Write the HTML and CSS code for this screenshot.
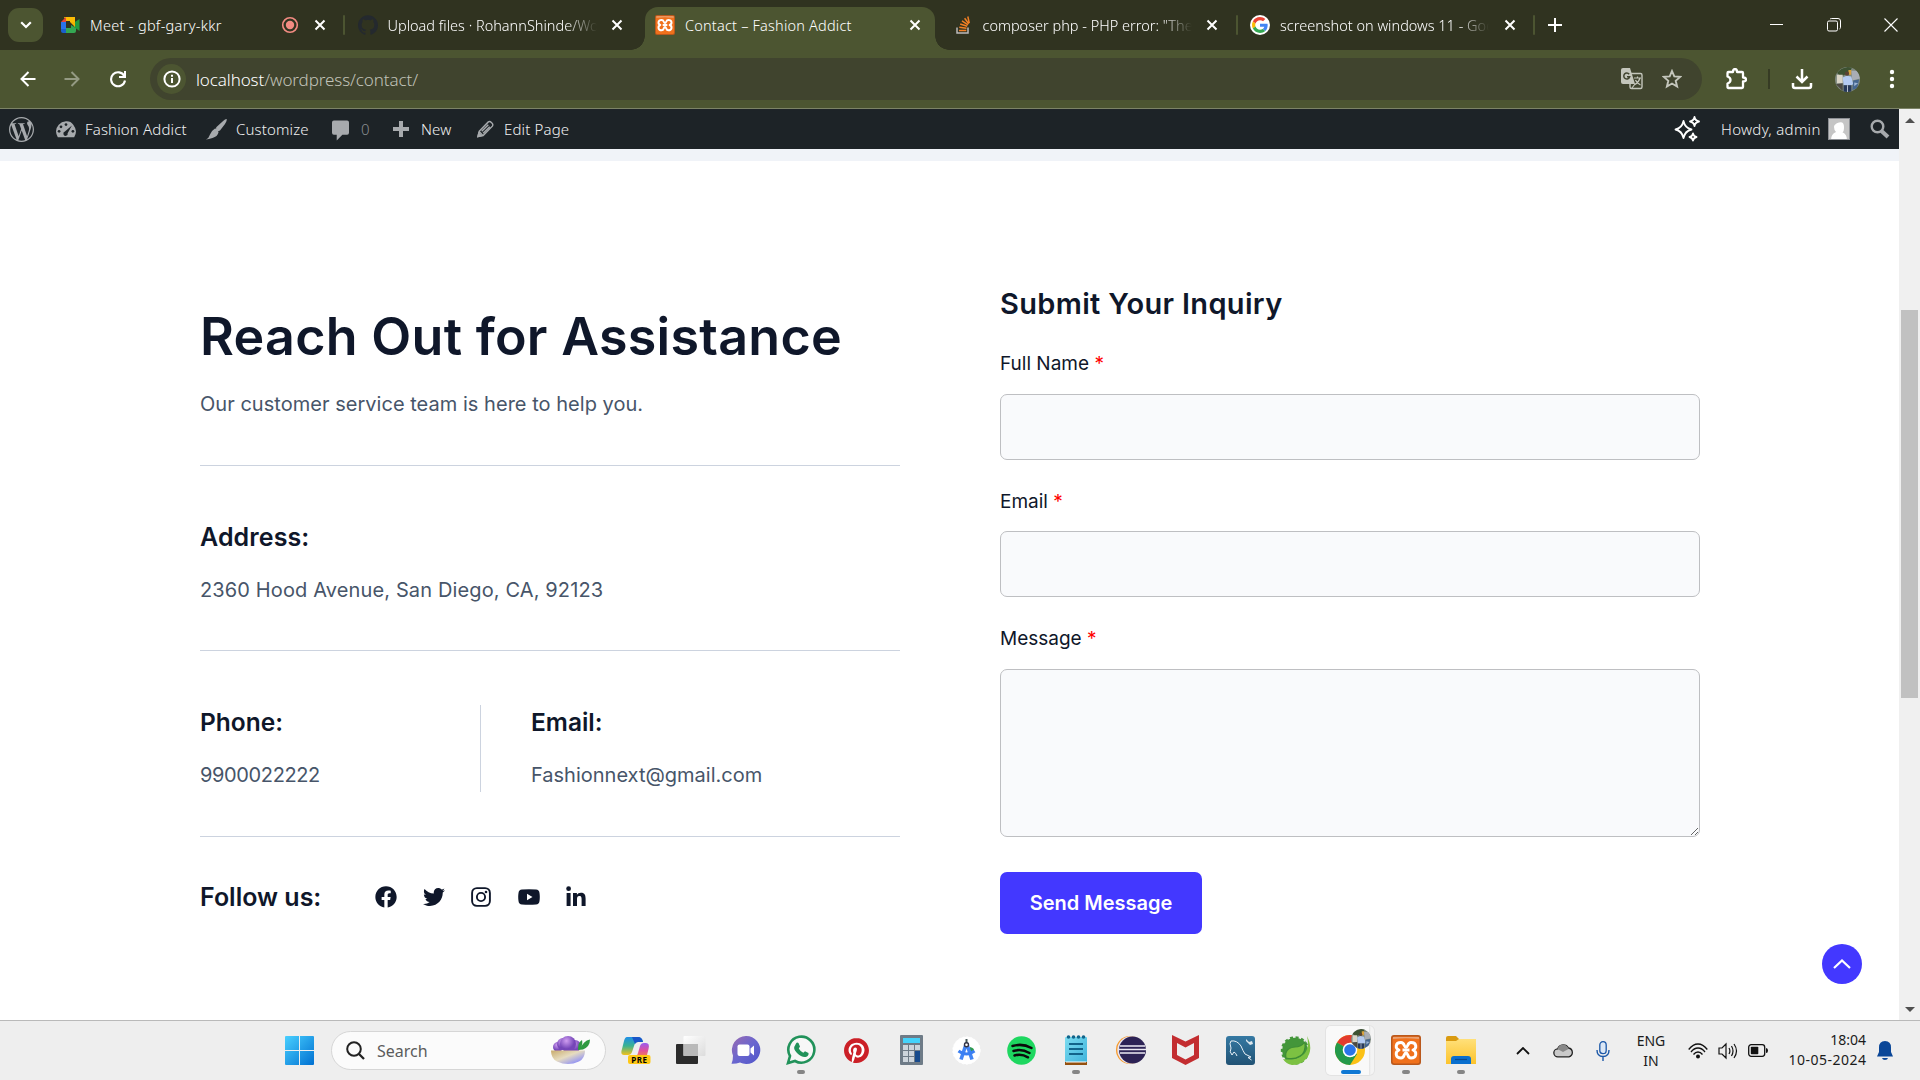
FILE: index.html
```html
<!DOCTYPE html>
<html lang="en">
<head>
<meta charset="utf-8">
<title>Contact – Fashion Addict</title>
<link rel="stylesheet" href="styles.css">
</head>
<body>
<svg class="defs" width="0" height="0" aria-hidden="true">
  <defs>
    <symbol id="x" viewBox="0 0 12 12"><path d="M1.5 1.5l9 9M10.500 1.5l-9 9" fill="none" stroke="currentColor" stroke-width="2"/></symbol>
    <symbol id="xampp" viewBox="0 0 30 30">
      <rect width="30" height="30" rx="3" fill="#b9581c"/><rect x="1.500" y="1.500" width="27" height="27" rx="2" fill="#f0711c"/><path d="M2 2h26v2q-13-1.500-26 0z" fill="#e9a274"/>
      <path d="M10 7.500C4 7.500 4 13.500 8 15c-4 1.500-4 8 2 8 4 0 2.500-5 5-5s1 5 5 5c6 0 6-6.500 2-8 4-1.500 4-7.500-2-7.500-4 0-2.500 4.500-5 4.500s-1-4.500-5-4.500zM11.500 15h7" fill="none" stroke="#fff" stroke-width="2.900" stroke-linejoin="round"/>
    </symbol>
    <symbol id="person" viewBox="0 0 26 26">
      <clipPath id="round"><circle cx="13" cy="13" r="13"/></clipPath>
      <g clip-path="url(#round)"><rect width="26" height="26" fill="#7f8a80"/><path d="M2 6Q8-1 18 0l-3 6-9 4z" fill="#3e5232"/><path d="M2 8h6v9H2z" fill="#d9d4c6"/><path d="M14 3h3v5h-3z" fill="#d8a23c"/><path d="M17 4h7l2 8-8 2z" fill="#a9adb4"/><path d="M8 11l4-2 5 1 2 8-2 1H9z" fill="#b4cbf2"/><circle cx="12.500" cy="7" r="2.200" fill="#5a4234"/><path d="M9 19h8v7H9z" fill="#27395a"/><path d="M12.500 19h1v7h-1z" fill="#b9c2cf"/><path d="M19 14l6-1-2 9-5 2z" fill="#44658f"/><path d="M20 16l4 1-4 3z" fill="#9db4d2"/><path d="M1 18l7-1v8z" fill="#4d4a42"/></g>
    </symbol>
    <linearGradient id="win" x1="0" y1="0" x2="1" y2="1"><stop offset="0" stop-color="#49d0ff"/><stop offset="1" stop-color="#0070d1"/></linearGradient>
    <linearGradient id="chat" x1="0" y1="0" x2="1" y2="1"><stop offset="0" stop-color="#9b6bb0"/><stop offset=".5" stop-color="#6a66cf"/><stop offset="1" stop-color="#4f55c9"/></linearGradient>
    <linearGradient id="cop1" x1="0" y1="0" x2="0" y2="1"><stop offset="0" stop-color="#1f8fe8"/><stop offset=".5" stop-color="#3bb38f"/><stop offset="1" stop-color="#f3c11b"/></linearGradient>
    <linearGradient id="cop2" x1="0" y1="0" x2="0" y2="1"><stop offset="0" stop-color="#9a5cf0"/><stop offset=".5" stop-color="#e0509c"/><stop offset="1" stop-color="#f9893f"/></linearGradient>
    <linearGradient id="sql" x1="0" y1="0" x2="0" y2="1"><stop offset="0" stop-color="#3579a3"/><stop offset="1" stop-color="#215274"/></linearGradient>
    <linearGradient id="fold" x1="0" y1="0" x2="0" y2="1"><stop offset="0" stop-color="#ffe07a"/><stop offset="1" stop-color="#fcc32c"/></linearGradient>
    <linearGradient id="bowl" x1="0" y1="0" x2="1" y2="1"><stop offset="0" stop-color="#c9ab6c"/><stop offset=".45" stop-color="#e6dcc0"/><stop offset=".8" stop-color="#9a9af0"/><stop offset="1" stop-color="#e0a0ea"/></linearGradient>
    <linearGradient id="glass" x1="0" y1="0" x2="1" y2="1"><stop offset="0" stop-color="#fff"/><stop offset="1" stop-color="#dcdcdc"/></linearGradient>
    <radialGradient id="berry" cx=".4" cy=".3"><stop offset="0" stop-color="#cf9df0"/><stop offset="1" stop-color="#7546b8"/></radialGradient>
    <linearGradient id="note" x1="0" y1="0" x2="1" y2="1"><stop offset="0" stop-color="#7ddcf0"/><stop offset="1" stop-color="#3fb4dc"/></linearGradient>
  </defs>
</svg>

<div class="screen">
  <header class="tabstrip">
    <button class="tab-search"><svg width="12" height="8" viewBox="0 0 12 8"><path d="M1.200 1.200L6 6l4.800-4.800" fill="none" stroke="#fff" stroke-width="2.200"/></svg></button>
    <div class="tabs">
      <div class="tab">
        <svg class="fav" viewBox="0 0 20 20"><path d="M4 2h11v5h-5V6H6z" fill="#fbbc04"/><path d="M1 7l5-5v5z" fill="#ea4335"/><path d="M1 7h5v7H1z" fill="#2a72e8"/><path d="M1 14h5v4H3q-2 0-2-2z" fill="#1a5fce"/><path d="M6 13h5v-3l5 3v3q0 2-2 2H6z" fill="#34a853"/><path d="M14 7.500L19.500 4v12L14 12z" fill="#23993d"/><path d="M10 7h5v5z" fill="#f5b400"/></svg>
        <span class="tab-title t-meet">Meet - gbf-gary-kkr</span>
        <svg class="rec" viewBox="0 0 18 18"><circle cx="9" cy="9" r="7.300" fill="none" stroke="#f28b82" stroke-width="1.600"/><circle cx="9" cy="9" r="4.200" fill="#f28b82"/></svg>
        <svg class="close"><use href="#x"/></svg>
      </div>
      <div class="tab">
        <svg class="fav" viewBox="0 0 24 24"><path fill="#24292e" d="M12 .297c-6.630 0-12 5.373-12 12 0 5.303 3.438 9.800 8.205 11.385.6.113.82-.258.82-.577 0-.285-.01-1.040-.015-2.040-3.338.724-4.042-1.610-4.042-1.610C4.422 18.070 3.633 17.700 3.633 17.700c-1.087-.744.084-.729.084-.729 1.205.084 1.838 1.236 1.838 1.236 1.070 1.835 2.809 1.305 3.495.998.108-.776.417-1.305.76-1.605-2.665-.3-5.466-1.332-5.466-5.930 0-1.310.465-2.380 1.235-3.220-.135-.303-.54-1.523.105-3.176 0 0 1.005-.322 3.300 1.230.96-.267 1.980-.399 3-.405 1.020.006 2.040.138 3 .405 2.280-1.552 3.285-1.230 3.285-1.230.645 1.653.24 2.873.12 3.176.765.84 1.230 1.910 1.230 3.220 0 4.610-2.805 5.625-5.475 5.920.42.36.81 1.096.81 2.220 0 1.606-.015 2.896-.015 3.286 0 .315.21.69.825.57C20.565 22.092 24 17.592 24 12.297c0-6.627-5.373-12-12-12"/></svg>
        <span class="tab-title fade t-upload">Upload files · RohannShinde/Wo</span>
        <svg class="close"><use href="#x"/></svg>
      </div>
      <div class="tab active">
        <svg class="fav"><use href="#xampp"/></svg>
        <span class="tab-title t-contact">Contact – Fashion Addict</span>
        <svg class="close"><use href="#x"/></svg>
      </div>
      <div class="tab">
        <svg class="fav" viewBox="0 0 20 20"><path d="M4 12.500v5.500h11v-5.500" fill="none" stroke="#bcbbbb" stroke-width="1.500"/><path d="M6 15.400h7.300M6.300 12.300l7.200.9M7.200 9l7 2.300M9 5.800l6 4M11.600 3.200l4.200 5.600M14.800 1.500l1.500 6.600" stroke="#f48024" stroke-width="1.500"/></svg>
        <span class="tab-title fade t-php">composer php - PHP error: "The</span>
        <svg class="close"><use href="#x"/></svg>
      </div>
      <div class="tab">
        <svg class="fav" viewBox="0 0 60 60"><circle cx="30" cy="30" r="30" fill="#fff"/><g transform="translate(6 6)"><path fill="#EA4335" d="M24 9.500c3.540 0 6.710 1.220 9.210 3.600l6.850-6.850C35.900 2.380 30.470 0 24 0 14.620 0 6.510 5.380 2.560 13.220l7.980 6.190C12.430 13.720 17.740 9.500 24 9.500z"/><path fill="#4285F4" d="M46.980 24.550c0-1.570-.15-3.090-.38-4.550H24v9.020h12.940c-.58 2.960-2.260 5.480-4.780 7.180l7.730 6c4.510-4.180 7.090-10.360 7.090-17.650z"/><path fill="#FBBC05" d="M10.530 28.590c-.48-1.450-.76-2.990-.76-4.590s.27-3.140.76-4.590l-7.980-6.190C.92 16.460 0 20.120 0 24c0 3.880.92 7.540 2.560 10.780l7.970-6.190z"/><path fill="#34A853" d="M24 48c6.480 0 11.930-2.130 15.890-5.810l-7.730-6c-2.150 1.450-4.920 2.300-8.160 2.300-6.260 0-11.570-4.220-13.470-9.910l-7.980 6.190C6.510 42.620 14.620 48 24 48z"/></g></svg>
        <span class="tab-title fade t-google">screenshot on windows 11 - Goo</span>
        <svg class="close"><use href="#x"/></svg>
      </div>
    </div>
    <svg class="newtab" viewBox="0 0 14 14"><path d="M7 0v14M0 7h14" stroke="#fff" stroke-width="2"/></svg>
    <div class="winctl">
      <svg width="14" height="14" viewBox="0 0 14 14"><path d="M0 6.500h13" stroke="#fff"/></svg>
      <svg width="14" height="14" viewBox="0 0 14 14"><rect x=".5" y="3" width="10" height="10" rx="1.500" fill="none" stroke="#fff"/><path d="M3 1.200q.5-.7 1.500-.7H11q2.500 0 2.500 2.500v6.500q0 1-1 1.500" fill="none" stroke="#fff"/></svg>
      <svg width="14" height="14" viewBox="0 0 14 14"><path d="M.5.5l13 13M13.500.5l-13 13" stroke="#fff" stroke-width="1.100"/></svg>
    </div>
  </header>

  <div class="toolbar">
    <svg class="nav-back" viewBox="0 0 16 16"><path d="M15.500 8H2M8.500 1L1.500 8l7 7" fill="none" stroke="#fff" stroke-width="2"/></svg>
    <svg class="nav-fwd" viewBox="0 0 16 16"><path d="M.5 8H14M7.500 1l7 7-7 7" fill="none" stroke="#949a83" stroke-width="2"/></svg>
    <svg class="nav-reload" viewBox="0 0 18 18"><path d="M15.300 6A7 7 0 1 0 16 10.500" fill="none" stroke="#fff" stroke-width="2.100"/><path d="M17 1v7h-7V6h5V1z" fill="#fff"/></svg>
    <div class="omnibox">
      <span class="info"><svg width="18" height="18" viewBox="0 0 18 18"><circle cx="9" cy="9" r="7.600" fill="none" stroke="#fff" stroke-width="2"/><path d="M9 8v5M9 4.700v2" stroke="#fff" stroke-width="2"/></svg></span>
      <span class="url"><b>localhost</b>/wordpress/contact/</span>
      <svg class="translate" viewBox="0 0 22 22"><rect x="9" y="5.500" width="12" height="15" rx="1.500" fill="none" stroke="#c4c6bc" stroke-width="1.400"/><path d="M2 0h7l5 16H2q-2 0-2-2V2q0-2 2-2z" fill="#c4c6bc"/><path d="M8.200 6.200A3 3 0 1 0 8.700 8.800H6" fill="none" stroke="#40442e" stroke-width="1.500"/><path d="M13 10h7M16.500 8.500V10M19 10q-1 4-5 6.500M14.500 12q1 3 5 5M11 20l3-4" fill="none" stroke="#c4c6bc" stroke-width="1.200"/></svg>
      <svg class="star" viewBox="0 0 20 20"><path d="M10 2l2.300 5.400 5.900.5-4.500 3.900 1.400 5.800L10 14.500l-5.100 3.100 1.400-5.800L1.800 7.900l5.900-.5z" fill="none" stroke="#c4c6bc" stroke-width="1.900"/></svg>
    </div>
    <svg class="ext" viewBox="0 0 22 22"><path d="M2.500 5q0-1 1-1H8q0-3 2-3t2 3h5q1 0 1 1v4.500q3 0 3 2t-3 2V19q0 1-1 1H3.500q-1 0-1-1v-3.500q3-1 3-3.500t-3-3.500z" fill="none" stroke="#fff" stroke-width="2.300" stroke-linejoin="round"/></svg>
    <i class="tb-sep"></i>
    <svg class="dl" viewBox="0 0 22 22"><path d="M11 1v12M5.500 8.500l5.500 5.500 5.500-5.500M2 15v3q0 2 2 2h14q2 0 2-2v-3" fill="none" stroke="#fff" stroke-width="2.500"/></svg>
    <svg class="avatar"><use href="#person"/></svg>
    <svg class="dots" viewBox="0 0 6 20"><circle cx="3" cy="3" r="2.200" fill="#fff"/><circle cx="3" cy="10" r="2.200" fill="#fff"/><circle cx="3" cy="17" r="2.200" fill="#fff"/></svg>
  </div>

  <div class="viewport">
    <div class="site">
      <nav class="adminbar">
        <svg class="wp" viewBox="0 0 24 24"><path fill="#a7aaad" d="M21.469 6.825c.84 1.537 1.318 3.300 1.318 5.175 0 3.979-2.156 7.456-5.363 9.325l3.295-9.527c.615-1.540.82-2.771.82-3.864 0-.405-.026-.78-.07-1.110m-7.981.105c.647-.03 1.232-.105 1.232-.105.582-.075.514-.93-.067-.899 0 0-1.755.135-2.880.135-1.064 0-2.850-.15-2.850-.15-.585-.03-.661.855-.075.885 0 0 .54.061 1.125.09l1.680 4.605-2.370 7.080L5.354 6.900c.649-.03 1.234-.1 1.234-.1.585-.075.516-.93-.065-.896 0 0-1.746.138-2.874.138-.2 0-.438-.008-.69-.015C4.911 3.150 8.235 1.215 12 1.215c2.809 0 5.365 1.072 7.286 2.833-.046-.003-.091-.009-.141-.009-1.060 0-1.812.923-1.812 1.914 0 .89.513 1.643 1.060 2.531.411.72.89 1.643.89 2.977 0 .915-.354 1.994-.821 3.479l-1.075 3.585-3.900-11.610zM12 22.784c-1.059 0-2.081-.153-3.048-.437l3.237-9.406 3.315 9.087c.024.053.05.101.078.149-1.120.393-2.325.609-3.582.609M1.211 12c0-1.564.336-3.050.935-4.390L7.290 21.709C3.694 19.960 1.212 16.271 1.211 12M12 0C5.385 0 0 5.385 0 12s5.385 12 12 12 12-5.385 12-12S18.615 0 12 0"/></svg>
        <svg class="dash" viewBox="0 0 22 18"><path d="M2 17.500Q0 14.500 0 11 0 7 3 3.700T11 0t8 3.700T22 11q0 3.500-2 6.500z" fill="#a7aaad"/><g fill="#1d2327"><circle cx="11" cy="3.600" r="1.500"/><circle cx="5.500" cy="6" r="1.500"/><circle cx="3.400" cy="11" r="1.500"/><circle cx="18.600" cy="11" r="1.500"/><path d="M17.500 4.500L12.800 13a2.400 2.400 0 1 1-3-1.700z"/></g></svg>
        <span class="ab-site">Fashion Addict</span>
        <svg class="brush" viewBox="0 0 21 21"><path d="M20.500 0q1 1-1.500 5l-5 6.500q-1.500 1-3-.5t-.5-3L16 3q3-3 4.500-3zM9 9.500q3 0 3.500 4-1 4-6 5.500-4 1-6.500 1.500 3-1.500 4-5t5-6z" fill="#a7aaad"/></svg>
        <span class="ab-cust">Customize</span>
        <svg class="comment" viewBox="0 0 18 21"><path d="M2 0h14q2 0 2 2v11q0 2-2 2h-5l-6 6v-6H2q-2 0-2-2V2q0-2 2-2z" fill="#a7aaad"/></svg>
        <span class="ab-zero">0</span>
        <svg class="plus" viewBox="0 0 16 16"><path d="M6 0h4v6h6v4h-6v6H6v-6H0V6h6z" fill="#a7aaad"/></svg>
        <span class="ab-new">New</span>
        <svg class="pencil" viewBox="0 0 18 18"><path d="M1 17l1.300-5.500L12 1.500q1.500-1 3.500.8t.8 3.700L6.500 16zM5 11.500l7-7M6.500 13.500l7-7M2.500 12l3.500 3.500" fill="none" stroke="#a7aaad" stroke-width="1.500"/><path d="M0 18l1.500-6 4.500 4.500z" fill="#a7aaad"/></svg>
        <span class="ab-edit">Edit Page</span>
        <svg class="spark" viewBox="0 0 26 26"><g fill="none" stroke="#fff" stroke-width="1.800" stroke-linejoin="round"><path d="M9.500 5q1.500 7 8 8.500-6.500 1.500-8 8.500-1.500-7-8-8.500 6.500-1.500 8-8.500z"/><path d="M20.500 1q.7 3.800 4.500 4.500-3.800.7-4.500 4.500-.7-3.800-4.500-4.500 3.800-.7 4.500-4.500zM19 17.500q.6 3 3.500 3.500-2.900.6-3.500 3.500-.6-2.900-3.500-3.500 2.900-.5 3.500-3.500z"/></g></svg>
        <span class="ab-howdy">Howdy, admin</span>
        <svg class="gravatar" viewBox="0 0 22 22"><rect width="22" height="22" fill="#c5c5c5"/><path d="M3 22q0-6 5-8-2-2-2-5t5-4.500 5 4.500-2 5q5 2 5 8z" fill="#fff"/><rect x=".5" y=".5" width="21" height="21" fill="none" stroke="#8c8f94"/></svg>
        <svg class="ab-search" viewBox="0 0 20 20"><circle cx="7.500" cy="7.500" r="5.800" fill="none" stroke="#a7aaad" stroke-width="2.400"/><path d="M11.500 12l6.500 6" stroke="#a7aaad" stroke-width="4"/></svg>
      </nav>
      <div class="strip"></div>
      <main class="contact">
        <section class="info-col">
          <h1>Reach Out for Assistance</h1>
          <p class="lead">Our customer service team is here to help you.</p>
          <div class="block address">
            <h2 class="h-address">Address:</h2>
            <p class="p-address">2360 Hood Avenue, San Diego, CA, 92123</p>
          </div>
          <div class="block pair">
            <div class="phone"><h2>Phone:</h2><p class="p-phone">9900022222</p></div>
            <div class="mail"><h2>Email:</h2><p class="p-mail">Fashionnext@gmail.com</p></div>
          </div>
          <div class="follow">
            <h2 class="h-follow">Follow us:</h2>
            <div class="social">
              <svg viewBox="0 0 512 512"><path d="M504 256C504 119 393 8 256 8S8 119 8 256c0 123.780 90.690 226.380 209.250 245V327.690h-63V256h63v-54.640c0-62.150 37-96.480 93.670-96.480 27.140 0 55.520 4.840 55.520 4.840v61h-31.280c-30.800 0-40.410 19.120-40.410 38.730V256h68.780l-11 71.690h-57.780V501C413.310 482.380 504 379.780 504 256z"/></svg>
              <svg viewBox="0 0 512 512"><path d="M459.370 151.716c.325 4.548.325 9.097.325 13.645 0 138.720-105.583 298.558-298.558 298.558-59.452 0-114.680-17.219-161.137-47.106 8.447.974 16.568 1.299 25.340 1.299 49.055 0 94.213-16.568 130.274-44.832-46.132-.975-84.792-31.188-98.112-72.772 6.498.974 12.995 1.624 19.818 1.624 9.421 0 18.843-1.300 27.614-3.573-48.081-9.747-84.143-51.980-84.143-102.985v-1.299c13.969 7.797 30.214 12.670 47.431 13.319-28.264-18.843-46.781-51.005-46.781-87.391 0-19.492 5.197-37.360 14.294-52.954 51.655 63.675 129.300 105.258 216.365 109.807-1.624-7.797-2.599-15.918-2.599-24.040 0-57.828 46.782-104.934 104.934-104.934 30.213 0 57.502 12.670 76.670 33.137 23.715-4.548 46.456-13.320 66.599-25.340-7.798 24.366-24.366 44.833-46.132 57.827 21.117-2.273 41.584-8.122 60.426-16.243-14.292 20.791-32.161 39.308-52.628 54.253z"/></svg>
              <svg viewBox="0 0 22 22"><rect x="2.100" y="2.100" width="17.800" height="17.800" rx="4.800" fill="none" stroke="#0f172a" stroke-width="1.900"/><circle cx="11" cy="11" r="4.100" fill="none" stroke="#0f172a" stroke-width="1.900"/><circle cx="16" cy="6" r="1.300"/></svg>
              <svg viewBox="0 0 22 22"><path fill-rule="evenodd" d="M4 3.500Q11 2.800 18 3.500q3.200.3 3.500 3.500.6 4 0 8-.3 3.200-3.500 3.500-7 .7-14 0-3.200-.3-3.500-3.500-.6-4 0-8Q.8 3.800 4 3.500zM9 7.800v6.400l5.500-3.200z"/></svg>
              <svg viewBox="0 0 22 22"><circle cx="3.600" cy="2.700" r="2.400"/><path d="M1.600 7h4v13h-4zM8 7h3.900v1.800Q13 6.700 15.900 6.700c4 0 4.700 2.600 4.700 6V20h-4v-6.500c0-1.500 0-3.500-2.200-3.500S12 11.700 12 13.400V20H8z"/></svg>
            </div>
          </div>
        </section>
        <form class="form-col">
          <h3>Submit Your Inquiry</h3>
          <label class="l-name">Full Name <em>*</em></label>
          <input class="i-name" type="text">
          <label class="l-email">Email <em>*</em></label>
          <input type="text">
          <label class="l-msg">Message <em>*</em></label>
          <textarea></textarea>
          <button type="button" class="send">Send Message</button>
        </form>
        <a class="totop"><svg width="18" height="10" viewBox="0 0 18 10"><path d="M1 9l8-7.500L17 9" fill="none" stroke="#fff" stroke-width="2.200"/></svg></a>
      </main>
    </div>
    <div class="scrollbar"><i class="up"></i><i class="thumb"></i><i class="down"></i></div>
  </div>

  <footer class="taskbar">
    <svg class="start" viewBox="0 0 29 29"><path d="M0 1q0-1 1-1h13v14H0zM15 0h13q1 0 1 1v13H15zM0 15h14v14H1q-1 0-1-1zM15 15h14v13q0 1-1 1H15z" fill="url(#win)"/></svg>
    <div class="search">
      <svg width="19" height="19" viewBox="0 0 19 19"><circle cx="8" cy="8" r="6.800" fill="none" stroke="#222" stroke-width="2"/><path d="M13 13l5 5" stroke="#222" stroke-width="2.300"/></svg>
      <span>Search</span>
      <svg class="bowl" viewBox="0 0 40 29"><g fill="url(#berry)"><circle cx="7" cy="11" r="5"/><circle cx="24" cy="10" r="6"/><circle cx="12" cy="8" r="6"/><circle cx="17" cy="8" r="8"/></g><path d="M0 14.500h34q0 8-6 11-11 5-22 0-6-3-6-11z" fill="url(#bowl)"/><path d="M27 14q0-8 4-10 1 3-1 8 2-7 9-8.500 0 7-7 10z" fill="#2f9a42"/></svg>
    </div>
    <div class="apps">
      <span><svg width="30" height="28" viewBox="0 0 30 28"><path d="M6 1h11q4 0 5 5h-5q-3 0-4 4l-2 6q-1 3-4 3H3q-4 0-2-6l2-8q1-4 3-4z" fill="url(#cop1)"/><path d="M11 1h6q4 0 5 5h-5q-2 0-3 2z" fill="#1956c8"/><path d="M23 7h2q4 0 2.500 6L26 19q-1 3-4 3h-8q2-1 3-5l2-7q1-3 4-3z" fill="url(#cop2)"/><rect x="7" y="19" width="22.500" height="9" rx="2" fill="#ffc814"/><text x="18.300" y="26.500" text-anchor="middle" class="pre">PRE</text></svg></span>
      <span><svg width="30" height="28" viewBox="0 0 30 28"><rect y="8" width="22" height="20" rx="1" fill="#2b2b2b"/><rect x="7.500" width="22" height="20" rx="1" fill="url(#glass)"/><path d="M7.500 8H22v12H7.500z" fill="#b9b9b9"/></svg></span>
      <span><svg width="30" height="30" viewBox="0 0 30 30"><path d="M15 1A14 14 0 1 1 9 27.500q-4 1.500-8.500 1.300Q2 26 2 20.500A14 14 0 0 1 15 1z" fill="url(#chat)"/><rect x="6.500" y="9.500" width="12" height="11.500" rx="2" fill="#fff"/><path d="M19.500 13.500l3.500-3v10l-3.500-3z" fill="#fff"/></svg></span>
      <span class="run"><svg width="30" height="30" viewBox="0 0 30 30"><path d="M2 28l2-7A13 13 0 1 1 9 26z" fill="#fff" fill-opacity=".5" stroke="#21925a" stroke-width="2.600"/><path d="M10 8.500q1-1.500 2.500-.5l1.500 3.500-1.200 2q1.500 3 4.500 4.300l1.700-1.500 3.500 1.700q.5 3-3 4-4 .5-8.500-4T9 10.500z" fill="#21925a"/></svg></span>
      <span><svg width="25" height="25" viewBox="0 0 24 24"><circle cx="12" cy="12" r="11.500" fill="#fff"/><path fill="#cb2027" d="M12.017 0C5.396 0 .029 5.367.029 11.987c0 5.079 3.158 9.417 7.618 11.162-.105-.949-.199-2.403.041-3.439.219-.937 1.406-5.957 1.406-5.957s-.359-.72-.359-1.781c0-1.663.967-2.911 2.168-2.911 1.024 0 1.518.769 1.518 1.688 0 1.029-.653 2.567-.992 3.992-.285 1.193.6 2.165 1.775 2.165 2.128 0 3.768-2.245 3.768-5.487 0-2.861-2.063-4.869-5.008-4.869-3.410 0-5.409 2.562-5.409 5.199 0 1.033.394 2.143.889 2.741.099.12.112.225.085.345-.09.375-.293 1.199-.334 1.363-.053.225-.172.271-.401.165-1.495-.69-2.433-2.878-2.433-4.646 0-3.776 2.748-7.252 7.920-7.252 4.158 0 7.392 2.967 7.392 6.923 0 4.135-2.607 7.462-6.233 7.462-1.214 0-2.354-.629-2.758-1.379l-.749 2.848c-.269 1.045-1.004 2.352-1.498 3.146 1.123.345 2.306.535 3.550.535 6.607 0 11.985-5.365 11.985-11.987C23.970 5.390 18.592.026 11.985.026z"/></svg></span>
      <span><svg width="23" height="30" viewBox="0 0 23 30"><rect width="23" height="30" rx="1" fill="#6e7b87"/><rect x="3" y="3" width="17" height="5" fill="#45d3fb"/><path d="M3 10h5v5H3zM9 10h5v5H9zM15 10h5v5h-5zM3 16h5v5H3zM9 16h5v5H9zM3 22h5v5H3zM9 22h5v5H9z" fill="#cdd5dc"/><rect x="15" y="16" width="5" height="11" fill="#174a8c"/></svg></span>
      <span><svg width="29" height="29" viewBox="0 0 29 29"><circle cx="14.500" cy="14.500" r="13.700" fill="#fff" stroke="#fff" stroke-dasharray="2 2"/><path d="M18 11q5 1 4 5l-4 1z" fill="#2f9b4d"/><path d="M14.500 7L9 23.500M14.500 7L20 23.500" stroke="#4285f4" stroke-width="3.600"/><path d="M6.500 15q8 6 16 0" fill="none" stroke="#3b7ff2" stroke-width="3"/><path d="M14.500 3v4" stroke="#455" stroke-width="2"/><circle cx="14.500" cy="8.700" r="2" fill="#fff" stroke="#334" stroke-width="1.400"/></svg></span>
      <span><svg width="29" height="29" viewBox="0 0 29 29"><circle cx="14.500" cy="14.500" r="14.300" fill="#1ed760"/><path d="M5.500 10q10-3 19 2M6.500 15q8-2.500 16 2M7.500 19.500q7-2 13.500 1.800" fill="none" stroke="#0b0b0b" stroke-width="2.500" stroke-linecap="round"/></svg></span>
      <span class="run"><svg width="22" height="30" viewBox="0 0 22 30"><rect y="2" width="22" height="25" rx="1" fill="url(#note)"/><path d="M0 27h22v3H0z" fill="#94500f"/><path d="M1 26.500h20v1H1z" fill="#fff"/><path d="M4 9h14M4 14h14M4 19h14" stroke="#12648a" stroke-width="2"/><g fill="#12648a"><circle cx="3.500" cy="2" r="1.800"/><circle cx="8.500" cy="2" r="1.800"/><circle cx="13.500" cy="2" r="1.800"/><circle cx="18.500" cy="2" r="1.800"/></g></svg></span>
      <span><svg width="30" height="28" viewBox="0 0 30 28"><circle cx="14" cy="14" r="14" fill="#f79a2b"/><circle cx="15" cy="14" r="13.700" fill="#e8e5f0"/><circle cx="16.500" cy="14" r="13.500" fill="#2c2255"/><path d="M4 10h25M3 13.500h27M4 17h25" stroke="#eceaf4" stroke-width="1.600"/></svg></span>
      <span><svg width="27" height="30" viewBox="0 0 27 30"><path d="M0 0l13.500 6.500L27 0v23l-13.500 7L0 23zM5 8v12l8.500 4.500L22 20V8l-8.500 4.500z" fill="#c32d30" fill-rule="evenodd"/></svg></span>
      <span><svg width="29" height="29" viewBox="0 0 29 29"><rect width="29" height="29" rx="3" fill="url(#sql)"/><path d="M6 19q-3-3-1-7-2-5 0-7 6-1 10 5 2 5 4 8l6 3-3 .5 3.500 2.500M6 19l2-3q2 1 3 4" fill="none" stroke="#e8f0f6" stroke-width="1"/><path d="M20 3l3 3 3-1 1 3-3 1-4-4z" fill="#dce6ec"/></svg></span>
      <span><svg width="31" height="30" viewBox="0 0 31 30"><circle cx="15" cy="15.500" r="12.800" fill="#43963a" stroke="#43963a" stroke-width="2.800" stroke-dasharray="3 2.500"/><path d="M27 1q7 14-1 23-5 6-14 6-6-1-9-6 13 2 20-4t4-19z" fill="#7cc142"/><path d="M6 23Q4 13 15 12q6 0 10-5 1 11-5 14-6 4-14 2z" fill="#7cc142" stroke="#3d8c36" stroke-width="1.200"/></svg></span>
      <span class="chrome"><svg width="38" height="36" viewBox="0 0 38 36"><circle cx="15" cy="21" r="15" fill="#fbc116"/><path d="M15 21L2 13.500A15 15 0 0 1 28 13.500H15z" fill="#e33b2e"/><path d="M2 13.500A15 15 0 0 0 15 36l7-11-7-4z" fill="#23994a"/><circle cx="15" cy="21" r="7.300" fill="#fff"/><circle cx="15" cy="21" r="5.800" fill="#2a74e8"/><svg x="16" y="0" width="20" height="20"><use href="#person"/></svg></svg></span>
      <span class="run"><svg width="30" height="30"><use href="#xampp"/></svg></span>
      <span class="run"><svg width="30" height="28" viewBox="0 0 30 28"><path d="M0 2q0-2 2-2h8l3 3v4H0z" fill="#d99a10"/><path d="M0 5h10l3-2h17v25H0z" fill="url(#fold)"/><path d="M5 28v-5q0-3 3-3h14q3 0 3 3v5z" fill="#0a6fce"/><path d="M9 23.500h12" stroke="#084a90" stroke-width="1.200"/></svg></span>
    </div>
    <svg class="chev" viewBox="0 0 14 8"><path d="M1 7l6-6 6 6" fill="none" stroke="#111" stroke-width="1.800"/></svg>
    <svg class="cloud" viewBox="0 0 20 15"><path d="M5 13.800a4 4 0 0 1-.3-8A6 6 0 0 1 15.500 5a4.500 4.500 0 0 1 .5 8.800z" fill="#c9c9c9" stroke="#222" stroke-width="1.300"/><path d="M4.500 6Q6 1.500 10 1.500T15.500 6L10 9z" fill="#888"/></svg>
    <svg class="mic" viewBox="0 0 14 20"><rect x="3.800" y=".7" width="6.400" height="12" rx="3.200" fill="#dce8f6" stroke="#1c58a8" stroke-width="1.300"/><path d="M1 9q0 6.500 6 6.500T13 9M7 15.500V20" fill="none" stroke="#1c58a8" stroke-width="1.400"/></svg>
    <div class="lang">ENG<br>IN</div>
    <svg class="wifi" viewBox="0 0 20 16"><g fill="none" stroke="#111" stroke-width="1.300"><path d="M.7 6.500Q5 1 10 1t9.300 5.500M3 9q3-4 7-4t7 4M5.500 11.500Q7.500 9 10 9t4.500 2.500"/></g><circle cx="10" cy="13.500" r="2" fill="#111"/></svg>
    <svg class="vol" viewBox="0 0 20 18"><g fill="none" stroke="#111" stroke-width="1.200"><path d="M1 6h3l4-4v14l-4-4H1zM11 6q1.800 3 0 6M13.500 4q3 5 0 10M16 2q5 7 0 14"/></g></svg>
    <svg class="batt" viewBox="0 0 20 13"><rect x=".7" y=".7" width="16" height="11.600" rx="2.500" fill="none" stroke="#111" stroke-width="1.300"/><rect x="2.800" y="2.800" width="7.500" height="7.400" rx=".8" fill="#111"/><path d="M18 4q2 0 2 2.500T18 9z" fill="#111"/></svg>
    <div class="clock"><span>18:04</span><span class="date">10-05-2024</span></div>
    <svg class="bell" viewBox="0 0 16 19"><path d="M8 0q6 0 6 6.500V11l2 4.500H0L2 11V6.500Q2 0 8 0zM5 17h6q-.5 2-3 2t-3-2z" fill="#0b4798"/></svg>
  </footer>
</div>
</body>
</html>
```
FILE: styles.css
```css
* { box-sizing: border-box; }
body { margin: 0; overflow: hidden; background: #fff; }
svg { display: block; flex: none; }
.defs { position: absolute; }
h1, h2, h3, p { margin: 0; }
button { border: 0; padding: 0; }
.screen { width: 1920px; height: 1080px; display: flex; flex-direction: column; font-family: "Noto Sans", "Open Sans", sans-serif; white-space: nowrap; }

/* Tab strip */
.tabstrip { height: 50px; background: #303320; display: flex; align-items: center; padding-left: 8px; color: #fff; }
.tab-search { width: 35px; height: 34px; border-radius: 11px; background: #4c5531; display: grid; place-items: center; }
.tabs { display: flex; align-self: flex-end; margin-left: 6px; }
.tab { position: relative; width: 297.5px; height: 43px; padding: 0 14px 7px 11px; display: flex; align-items: center; }
.tab:nth-child(1)::after, .tab:nth-child(4)::after, .tab:nth-child(5)::after { content: ""; position: absolute; left: 294px; top: 8px; width: 2px; height: 20px; background: #4c5531; border-radius: 1px; }
.tab.active::before { content: ""; position: absolute; z-index: 0; left: 1px; top: 0; width: 290px; height: 43px; border-radius: 13px 13px 0 0; background: #4c5531; }
.tab.active::after { content: ""; position: absolute; left: -13px; bottom: 0; width: 318px; height: 14px; background: radial-gradient(circle at 0 0, transparent 13.5px, #4c5531 14px) left / 14px 14px no-repeat, radial-gradient(circle at 14px 0, transparent 13.5px, #4c5531 14px) right / 14px 14px no-repeat; }
.tab > * { position: relative; z-index: 1; }
.fav { width: 20px; height: 20px; margin-right: 10px; }
.tab-title { flex: 0 0 209px; font-size: 14.5px; font-weight: 300; line-height: 22px; }
.fade { -webkit-mask-image: linear-gradient(90deg, #000 178px, transparent 209px); mask-image: linear-gradient(90deg, #000 178px, transparent 209px); }
.t-meet { flex-basis: 181px; margin-right: 10px; letter-spacing: .3px; }
.t-contact { letter-spacing: .2px; }
.rec { width: 18px; height: 18px; }
.close { width: 12px; height: 12px; margin-left: auto; margin-right: 7px; color: #fff; }
.newtab { width: 14px; height: 14px; margin-left: 11px; }
.winctl { margin-left: auto; margin-right: 22px; display: flex; gap: 43px; }

/* Toolbar */
.toolbar { height: 59px; background: #4c5531; border-bottom: 1px solid #7c8366; display: flex; align-items: center; padding-left: 20px; }
.nav-back, .nav-fwd { width: 16px; height: 16px; }
.nav-fwd { margin-left: 28px; }
.nav-reload { width: 18px; height: 18px; margin: 0 23px 0 29px; }
.omnibox { width: 1552px; height: 42px; border-radius: 21px; background: #40442e; display: flex; align-items: center; padding: 0 20px 0 7px; }
.info { width: 29px; height: 30px; border-radius: 50%; background: #4c5531; display: grid; place-items: center; }
.url { margin-left: 10px; font-size: 17px; font-weight: 300; color: #c0c2b8; letter-spacing: -.1px; }
.url b { font-weight: 300; color: #fff; }
.translate { width: 22px; height: 22px; margin-left: auto; }
.star { width: 20px; height: 20px; margin-left: 19px; }
.ext { width: 22px; height: 22px; margin-left: 23px; }
.tb-sep { width: 2px; height: 20px; background: #363b24; margin: 0 21px 0 21px; }
.dl { width: 22px; height: 22px; }
.avatar { width: 25px; height: 25px; margin-left: 22px; }
.dots { width: 6px; height: 20px; margin-left: 29px; }

/* WordPress admin bar */
.viewport { flex: 1; display: flex; min-height: 0; }
.site { width: 1899px; }
.adminbar { height: 40px; background: #1d2327; display: flex; align-items: center; padding-left: 9px; color: #f0f0f1; font-size: 15px; font-weight: 300; letter-spacing: .15px; }
.wp { width: 25px; height: 25px; }
.dash { width: 20px; height: 17px; margin: 0 9px 0 22px; }
.ab-site { width: 121px; }
.brush { width: 21px; height: 21px; margin-right: 9px; }
.ab-cust { width: 96px; }
.comment { width: 17px; height: 21px; margin: 2px 12px 0 0; }
.ab-zero { width: 32px; color: #8b8e91; }
.plus { width: 16px; height: 16px; margin-right: 12px; }
.ab-new { width: 56px; }
.pencil { width: 17px; height: 18px; margin-right: 10px; }
.spark { width: 26px; height: 26px; margin-left: auto; }
.ab-howdy { width: 101px; margin: 0 6px 0 21px; letter-spacing: .3px; }
.gravatar { width: 22px; height: 22px; }
.ab-search { width: 20px; height: 20px; margin: 0 9px 0 20px; }
.strip { height: 12px; background: #f0f3f8; }

/* Contact page */
.contact { position: relative; height: 859px; display: flex; gap: 100px; padding: 0 199px 0 200px; font-family: Inter, sans-serif; color: #0f172a; }
.info-col { width: 700px; flex: none; padding-top: 144px; }
h1 { font-size: 52px; line-height: 64px; font-weight: 600; letter-spacing: .28px; }
.info-col p { font-size: 20px; line-height: 32px; color: #475569; }
.info-col .lead { margin-top: 19px; height: 77px; letter-spacing: .03px; }
.block { border-top: 1px solid #ccd3df; }
.address { height: 185px; padding-top: 54px; }
h2 { font-size: 24.5px; line-height: 34px; font-weight: 600; }
.info-col h2 + p { margin-top: 20px; }
.info-col .p-address { letter-spacing: .13px; }
.info-col .p-phone { letter-spacing: -.37px; }
.pair { height: 187px; padding-top: 54px; display: flex; border-bottom: 1px solid #ccd3df; }
.phone { width: 281px; height: 87px; border-right: 1px solid #ccd3df; }
.mail { padding-left: 50px; }
.follow { padding-top: 43px; display: flex; align-items: center; }
.h-address { font-size: 25px; letter-spacing: .1px; }
.h-follow { width: 175px; font-size: 25px; }
.social { display: flex; gap: 25.5px; }
.social svg { width: 22px; height: 22px; fill: #0f172a; }
.form-col { width: 700px; flex: none; padding-top: 123px; }
h3 { font-size: 29px; line-height: 40px; font-weight: 600; height: 65px; letter-spacing: .33px; }
label { display: block; font-size: 19px; line-height: 28px; height: 45px; padding-top: 1px; }
.l-email { padding-top: 2px; }
em { color: #f00; font-style: normal; }
input, textarea { display: block; width: 700px; border: 1px solid #bebfc2; border-radius: 7px; background: #f9fafc; padding: 0; margin: 0; }
input { height: 66px; margin-bottom: 27px; }
.i-name { margin-bottom: 26px; }
textarea { height: 168px; margin-bottom: 35px; }
.send { width: 202px; height: 62px; border-radius: 7px; background: #4338ff; color: #fff; font: 600 20px Inter, sans-serif; }
.totop { position: absolute; left: 1822px; top: 783px; width: 40px; height: 40px; border-radius: 50%; background: #4338ff; display: grid; place-items: center; }

/* Scrollbar */
.scrollbar { width: 21px; background: #f0f0f0; display: flex; flex-direction: column; align-items: center; }
.up, .down { border: 5px solid transparent; }
.up { border-top: 0; border-bottom-color: #505050; margin-top: 9px; }
.thumb { width: 17px; height: 388px; margin-top: 187px; background: #c1c1c1; }
.down { border-bottom: 0; border-top-color: #505050; margin-top: auto; margin-bottom: 8px; }

/* Taskbar */
.taskbar { height: 60px; background: #eee; border-top: 1px solid #b9b9b9; display: flex; align-items: center; padding-left: 285px; color: #1b1b1b; }
.start { width: 29px; height: 29px; }
.search { width: 275px; height: 39px; margin-left: 17px; border: 1px solid #d6d6d6; border-radius: 20px; background: #fbfbfb; display: flex; align-items: center; padding: 0 14px; }
.search span { margin-left: 12px; font-size: 16px; color: #5c5c5c; }
.bowl { width: 40px; height: 29px; margin-left: auto; }
.apps { display: grid; grid-template-columns: repeat(16, 54.94px); height: 59px; margin-left: 3px; padding-bottom: 1px; }
.apps span { position: relative; display: grid; place-items: center; }
.run::after, .chrome::after { content: ""; position: absolute; left: 50%; bottom: 5px; width: 8px; height: 4px; margin-left: -4px; border-radius: 2px; background: #858585; }
.pre { font: 700 8px "Noto Sans", sans-serif; letter-spacing: .5px; }
.chrome::before { content: ""; position: absolute; left: 3px; top: 5px; width: 48px; height: 49px; border-radius: 5px; background: linear-gradient(90deg, #f9f9f9 43px, #e2e2e2 43px, #f4f4f4 45px); box-shadow: 0 0 0 1px #e3e3e3; }
.chrome::after { width: 20px; margin-left: -10px; background: #0f78d4; }
.chrome svg { position: relative; left: 3px; top: -3px; }
.chev { width: 14px; height: 8px; margin-left: 28px; }
.cloud { width: 20px; height: 15px; margin-left: 23px; }
.mic { width: 14px; height: 20px; margin-left: 23px; }
.lang { width: 50px; margin-left: 16px; text-align: center; font-size: 14px; line-height: 20px; }
.wifi { width: 20px; height: 16px; margin-left: 12px; }
.vol { width: 20px; height: 18px; margin-left: 10px; }
.batt { width: 20px; height: 13px; margin-left: 10px; }
.clock { margin-left: auto; padding-bottom: 2px; display: flex; flex-direction: column; align-items: flex-end; font-size: 14px; line-height: 20px; }
.date { letter-spacing: .5px; margin-right: -.5px; }
.bell { width: 16px; height: 19px; margin: 0 27px 0 11px; }
```
